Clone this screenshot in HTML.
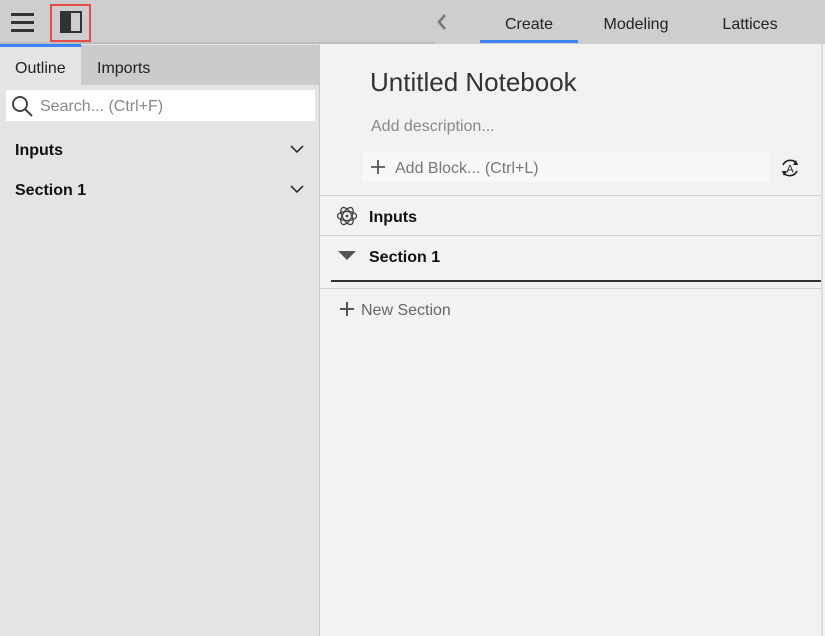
<!DOCTYPE html>
<html><head><meta charset="utf-8"><style>
*{box-sizing:border-box;margin:0;padding:0}
body{width:825px;height:636px;overflow:hidden;background:#f2f2f2;font-family:"Liberation Sans",sans-serif;position:relative;color:#222}
.a{position:absolute}
</style></head><body>
<div class="a" style="left:0;top:0;width:825px;height:44px;background:#cecece"></div>
<div class="a" style="left:0;top:42px;width:435px;height:2px;background:#bdbdbd"></div>
<div class="a" style="left:11px;top:13px;width:23px;height:3px;background:#333"></div>
<div class="a" style="left:11px;top:21px;width:23px;height:3px;background:#333"></div>
<div class="a" style="left:11px;top:29px;width:23px;height:3px;background:#333"></div>
<div class="a" style="left:50px;top:4px;width:41px;height:38px;border:2px solid #e84a4a"></div>
<div class="a" style="left:60px;top:11px;width:22px;height:22px;border:2px solid #333;background:linear-gradient(90deg,#333 50%,transparent 50%)"></div>
<svg class="a" style="left:434px;top:13px" width="16" height="18" viewBox="0 0 16 18"><path d="M11 2 L5 9 L11 16" fill="none" stroke="#777" stroke-width="2.5"/></svg>
<div class="a" style="left:480px;top:16px;width:98px;text-align:center;font-size:16px;color:#222">Create</div>
<div class="a" style="left:480px;top:40px;width:98px;height:3px;background:#3b82f6"></div>
<div class="a" style="left:596px;top:16px;width:80px;text-align:center;font-size:16px;color:#222">Modeling</div>
<div class="a" style="left:710px;top:16px;width:80px;text-align:center;font-size:16px;color:#222">Lattices</div>
<div class="a" style="left:0;top:44px;width:320px;height:592px;background:#e4e4e4;border-right:1px solid #c8c8c8"></div>
<div class="a" style="left:81px;top:45px;width:238px;height:40px;background:#cbcbcb"></div>
<div class="a" style="left:0;top:44px;width:81px;height:3px;background:#3b82f6"></div>
<div class="a" style="left:15px;top:60px;font-size:16px;color:#222">Outline</div>
<div class="a" style="left:97px;top:60px;font-size:16px;color:#222">Imports</div>
<div class="a" style="left:6px;top:90px;width:309px;height:31px;background:#fff"></div>
<svg class="a" style="left:11px;top:95px" width="24" height="22" viewBox="0 0 24 22"><circle cx="9" cy="9" r="7" fill="none" stroke="#444" stroke-width="2"/><path d="M14 14 L21 21" stroke="#444" stroke-width="2"/></svg>
<div class="a" style="left:40px;top:98px;font-size:16px;color:#888">Search... (Ctrl+F)</div>
<div class="a" style="left:15px;top:142px;font-size:16px;color:#111;font-weight:bold">Inputs</div>
<div class="a" style="left:15px;top:182px;font-size:16px;color:#111;font-weight:bold">Section 1</div>
<svg class="a" style="left:290px;top:144px" width="14" height="10"><path d="M1 2 L7 8 L13 2" fill="none" stroke="#333" stroke-width="1.6"/></svg>
<svg class="a" style="left:290px;top:184px" width="14" height="10"><path d="M1 2 L7 8 L13 2" fill="none" stroke="#333" stroke-width="1.6"/></svg>
<div class="a" style="left:821px;top:44px;width:2px;height:592px;background:#ddd"></div>
<div class="a" style="left:370px;top:67px;font-size:26px;color:#333">Untitled Notebook</div>
<div class="a" style="left:371px;top:118px;font-size:16px;color:#888">Add description...</div>
<div class="a" style="left:363px;top:152px;width:406px;height:30px;background:#f8f8f8"></div>
<svg class="a" style="left:370px;top:159px" width="16" height="16"><path d="M8 1V15M1 8H15" stroke="#555" stroke-width="1.8"/></svg>
<div class="a" style="left:395px;top:160px;font-size:16px;color:#777">Add Block... (Ctrl+L)</div>
<svg class="a" style="left:779px;top:157px" width="22" height="22" viewBox="0 0 22 22"><path d="M4 8 A8 8 0 0 1 18 7 M18 14 A8 8 0 0 1 4 15" fill="none" stroke="#222" stroke-width="1.6"/><path d="M17 3 L19 8 L14 8Z M5 19 L3 14 L8 14Z" fill="#222"/><text x="11" y="15.5" font-size="11" text-anchor="middle" font-family="Liberation Sans" fill="#222">A</text></svg>
<div class="a" style="left:320px;top:195px;width:501px;height:1px;background:#d0d0d0"></div>
<svg class="a" style="left:336px;top:205px" width="22" height="22" viewBox="0 0 22 22"><g fill="none" stroke="#444" stroke-width="1.3"><ellipse cx="11" cy="11" rx="9.5" ry="4.5"/><ellipse cx="11" cy="11" rx="9.5" ry="4.5" transform="rotate(60 11 11)"/><ellipse cx="11" cy="11" rx="9.5" ry="4.5" transform="rotate(120 11 11)"/></g><circle cx="11" cy="11" r="1.4" fill="#444"/></svg>
<div class="a" style="left:369px;top:209px;font-size:16px;font-weight:bold;color:#111">Inputs</div>
<div class="a" style="left:320px;top:235px;width:501px;height:1px;background:#d0d0d0"></div>
<svg class="a" style="left:338px;top:251px" width="18" height="10"><path d="M0 0H18L9 9Z" fill="#555"/></svg>
<div class="a" style="left:369px;top:249px;font-size:16px;font-weight:bold;color:#111">Section 1</div>
<div class="a" style="left:331px;top:280px;width:490px;height:2px;background:#333"></div>
<div class="a" style="left:320px;top:288px;width:501px;height:1px;background:#d0d0d0"></div>
<svg class="a" style="left:339px;top:301px" width="16" height="16"><path d="M8 1V15M1 8H15" stroke="#555" stroke-width="2"/></svg>
<div class="a" style="left:361px;top:302px;font-size:16px;color:#666">New Section</div>
</body></html>
